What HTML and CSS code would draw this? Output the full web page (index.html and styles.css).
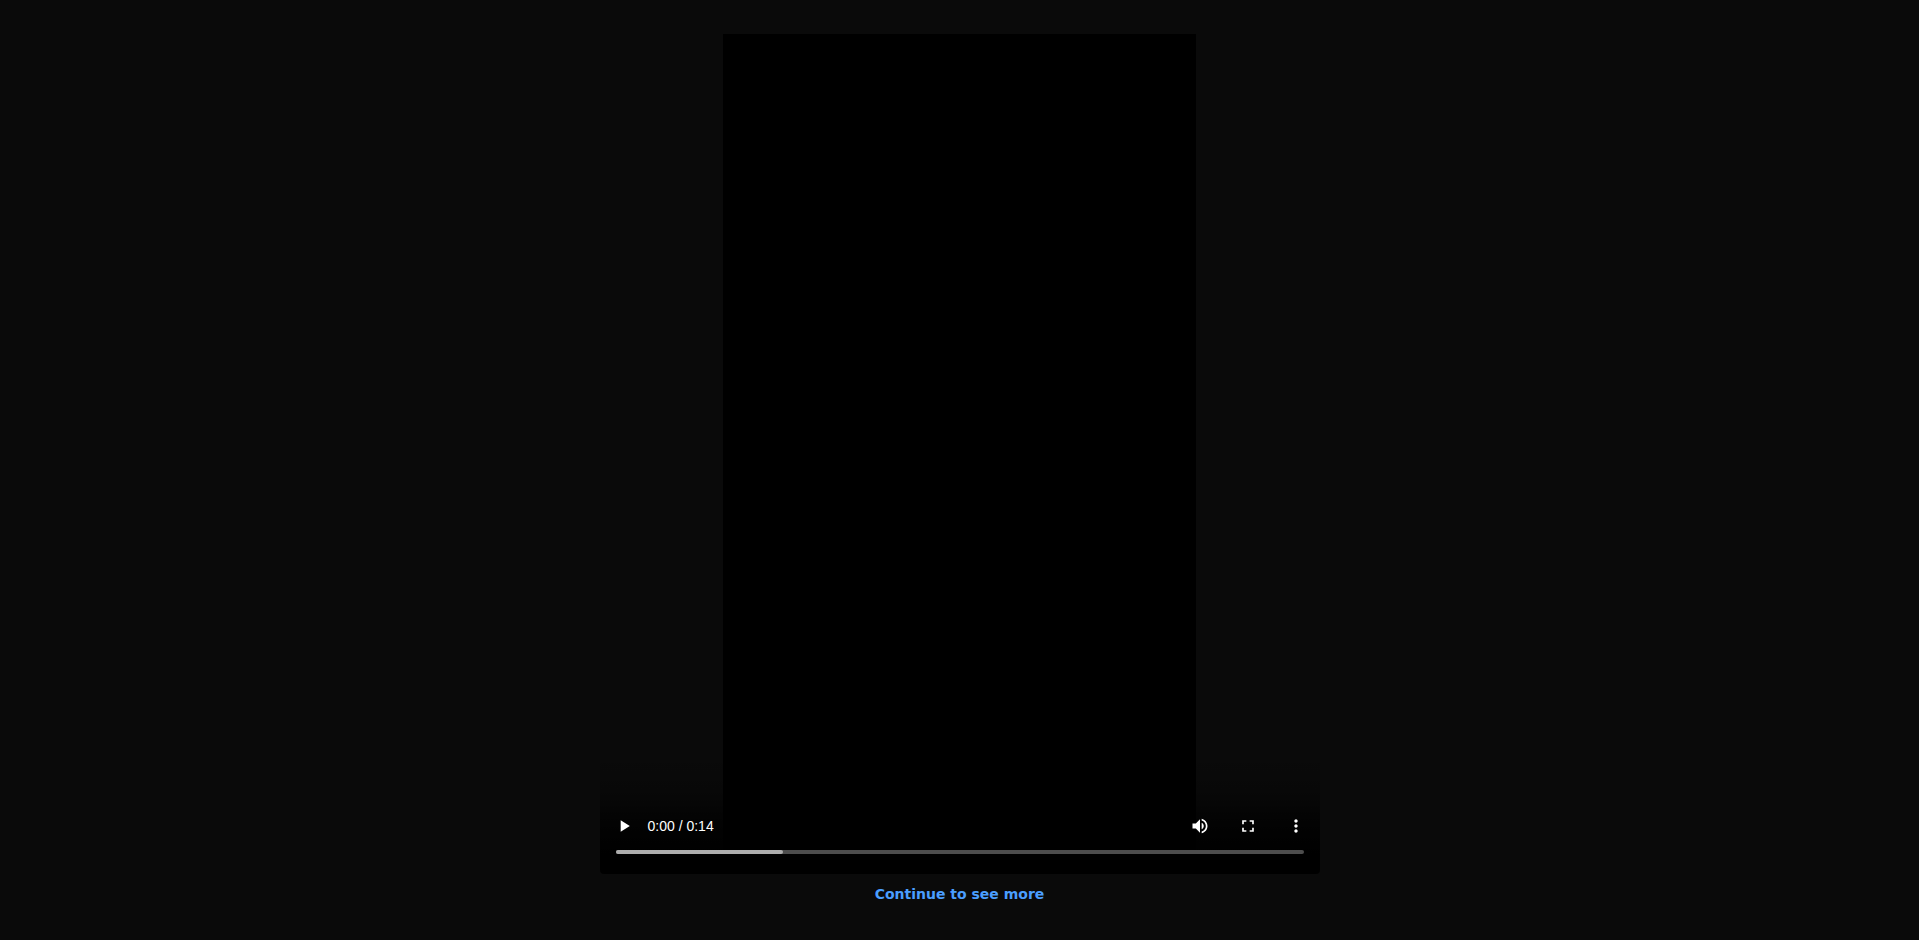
FILE: index.html
```html
<!DOCTYPE html>
<html lang="en">
<head>
<meta charset="utf-8">
<meta name="viewport" content="width=device-width, initial-scale=1">
<title>Video</title>
<link rel="stylesheet" href="styles.css">
</head>
<body>
<main class="page">
  <section class="player" aria-label="Video player">
    <div class="picture"></div>
    <div class="controls">
      <div class="buttons">
        <button class="control" type="button" aria-label="Play">
          <svg class="icon" viewBox="0 0 24 24"><path d="M8 5v14l11-7z"/></svg>
        </button>
        <span class="time">0:00 / 0:14</span>
        <button class="control" type="button" aria-label="Mute">
          <svg class="icon" viewBox="0 0 24 24"><path d="M3 9v6h4l5 5V4L7 9H3zm13.5 3c0-1.77-1.02-3.29-2.5-4.03v8.05c1.48-.73 2.5-2.25 2.5-4.02zM14 3.23v2.06c2.89.86 5 3.54 5 6.71s-2.11 5.85-5 6.71v2.06c4.01-.91 7-4.49 7-8.77s-2.99-7.86-7-8.77z"/></svg>
        </button>
        <button class="control" type="button" aria-label="Enter full screen">
          <svg class="icon" viewBox="0 0 24 24"><path d="M7 14H5v5h5v-2H7v-3zm-2-4h2V7h3V5H5v5zm12 7h-3v2h5v-5h-2v3zM14 5v2h3v3h2V5h-5z"/></svg>
        </button>
        <button class="control" type="button" aria-label="More options">
          <svg class="icon" viewBox="0 0 24 24"><path d="M12 8c1.1 0 2-.9 2-2s-.9-2-2-2-2 .9-2 2 .9 2 2 2zm0 2c-1.1 0-2 .9-2 2s.9 2 2 2 2-.9 2-2-.9-2-2-2zm0 6c-1.1 0-2 .9-2 2s.9 2 2 2 2-.9 2-2-.9-2-2-2z"/></svg>
        </button>
      </div>
      <div class="timeline">
        <div class="buffered" style="width: 24.3%"></div>
        <input class="seek" type="range" min="0" max="14" value="0" aria-label="Seek">
      </div>
    </div>
  </section>
  <a class="more" href="#">Continue to see more</a>
</main>
</body>
</html>
```
FILE: styles.css
```css
* {
  box-sizing: border-box;
}

body {
  margin: 0;
  background: #0a0a0a;
  color: #fff;
}

.page {
  display: flex;
  flex-direction: column;
  align-items: center;
  justify-content: center;
  gap: 12px;
  min-height: 100vh;
  padding-bottom: 4px;
}

.player {
  position: relative;
  display: flex;
  justify-content: center;
  width: 100%;
  max-width: 720px;
  height: calc(100vh - 100px);
  border-radius: 4px;
  overflow: hidden;
}

.picture {
  height: 100%;
  aspect-ratio: 9 / 16;
  background: #000;
}

/* Lies over the lower edge of the picture. */
.controls {
  position: absolute;
  right: 0;
  bottom: 0;
  left: 0;
  padding: 48px 0 20px;
  background: linear-gradient(to top, #000 20px, rgba(0, 0, 0, 0.7) 52px, rgba(0, 0, 0, 0.2) 84px, transparent);
}

.buttons {
  display: flex;
  align-items: center;
}

.control {
  display: flex;
  align-items: center;
  justify-content: center;
  width: 48px;
  height: 48px;
  padding: 0;
  border: 0;
  background: none;
  color: inherit;
  cursor: pointer;
}

.icon {
  width: 20px;
  height: 20px;
  fill: currentColor;
}

.time {
  margin-right: auto;
  font: 14px/16px "Liberation Sans", Arial, sans-serif;
}

.timeline {
  position: relative;
  height: 4px;
  margin: 0 16px;
  border-radius: 2px;
  background: #4d4d4d;
}

.buffered {
  height: 100%;
  border-radius: 2px;
  background: #adadad;
}

/* Invisible hit area over the timeline. */
.seek {
  position: absolute;
  inset: 0;
  width: 100%;
  height: 100%;
  margin: 0;
  opacity: 0;
  cursor: pointer;
}

.more {
  color: #4a9eff;
  font: bold 14px/16px "DejaVu Sans", sans-serif;
  text-decoration: none;
}
```
